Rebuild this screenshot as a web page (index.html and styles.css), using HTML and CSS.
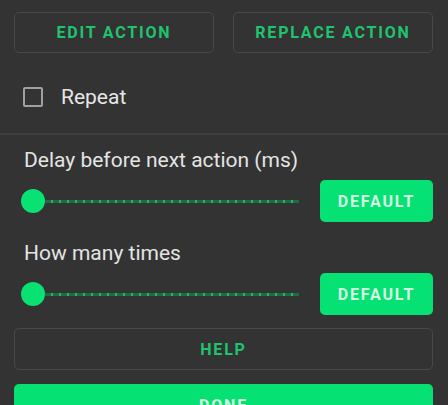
FILE: index.html
```html
<!DOCTYPE html>
<html>
<head>
<meta charset="utf-8">
<link rel="stylesheet" href="styles.css">
</head>
<body>
<div class="panel">
  <div class="top-row">
    <button class="btn outline">EDIT ACTION</button>
    <button class="btn outline">REPLACE ACTION</button>
  </div>
  <label class="repeat">
    <span class="checkbox"></span>
    <span class="repeat-text">Repeat</span>
  </label>
  <div class="divider"></div>
  <div class="section">
    <div class="label">Delay before next action (ms)</div>
    <div class="slider-row">
      <div class="slider">
        <span class="thumb"></span>
        <span class="track"></span>
      </div>
      <button class="btn filled small">DEFAULT</button>
    </div>
    <div class="label second">How many times</div>
    <div class="slider-row">
      <div class="slider">
        <span class="thumb"></span>
        <span class="track"></span>
      </div>
      <button class="btn filled small">DEFAULT</button>
    </div>
  </div>
  <button class="btn outline wide help">HELP</button>
  <button class="btn filled wide done">DONE</button>
</div>
</body>
</html>
```
FILE: styles.css
```css
* { box-sizing: border-box; }
html, body {
  margin: 0;
  padding: 0;
  background: #333333;
  overflow: hidden;
}
body {
  font-family: Roboto, "Noto Sans", sans-serif;
  color: #e2e2e2;
}
.panel {
  padding: 12px 15px 0 14px;
  display: flex;
  flex-direction: column;
}
.btn {
  font-family: Roboto, "Noto Sans", sans-serif;
  font-weight: 700;
  font-size: 16px;
  letter-spacing: 1.8px;
  height: 41px;
  border-radius: 5px;
  cursor: pointer;
  padding: 0;
  display: flex;
  align-items: center;
  justify-content: center;
}
.outline {
  background: transparent;
  border: 1px solid #484848;
  color: #1fc46f;
}
.filled {
  background: #05e172;
  border: none;
  color: #d6f7e3;
}
.top-row {
  display: flex;
  gap: 19px;
}
.top-row .btn {
  flex: 1;
}
.repeat {
  display: flex;
  align-items: center;
  height: 40px;
  margin-top: 24px;
  padding-left: 9px;
}
.checkbox {
  width: 20px;
  height: 20px;
  border: 2px solid #a0a0a0;
  border-radius: 2px;
}
.repeat-text {
  margin-left: 18px;
  font-size: 21px;
  color: #e6e6e6;
}
.divider {
  height: 2px;
  background: #3e3e3e;
  margin: 16px -15px 0 -14px;
}
.section {
  padding-left: 10px;
}
.label {
  font-size: 21px;
  line-height: 24px;
  margin-top: 13px;
  color: #e4e4e4;
}
.label.second {
  margin-top: 19px;
}
.slider-row {
  display: flex;
  align-items: center;
  margin-top: 8px;
  height: 42px;
}
.slider {
  flex: 0 0 278px;
  margin-left: -3px;
  display: flex;
  align-items: center;
}
.thumb {
  width: 24px;
  height: 24px;
  border-radius: 50%;
  background: #08e273;
  flex: 0 0 24px;
}
.track {
  flex: 1;
  height: 3px;
  background-color: #1a6e43;
  background-image: repeating-linear-gradient(90deg, transparent 0 6px, #2fb06c 6px 8px);
}
.slider-row .btn.small {
  margin-left: auto;
  width: 113px;
  height: 42px;
}
.wide {
  width: 100%;
  height: 42px;
}
.help {
  margin-top: 13px;
}
.done {
  margin-top: 14px;
}
```
